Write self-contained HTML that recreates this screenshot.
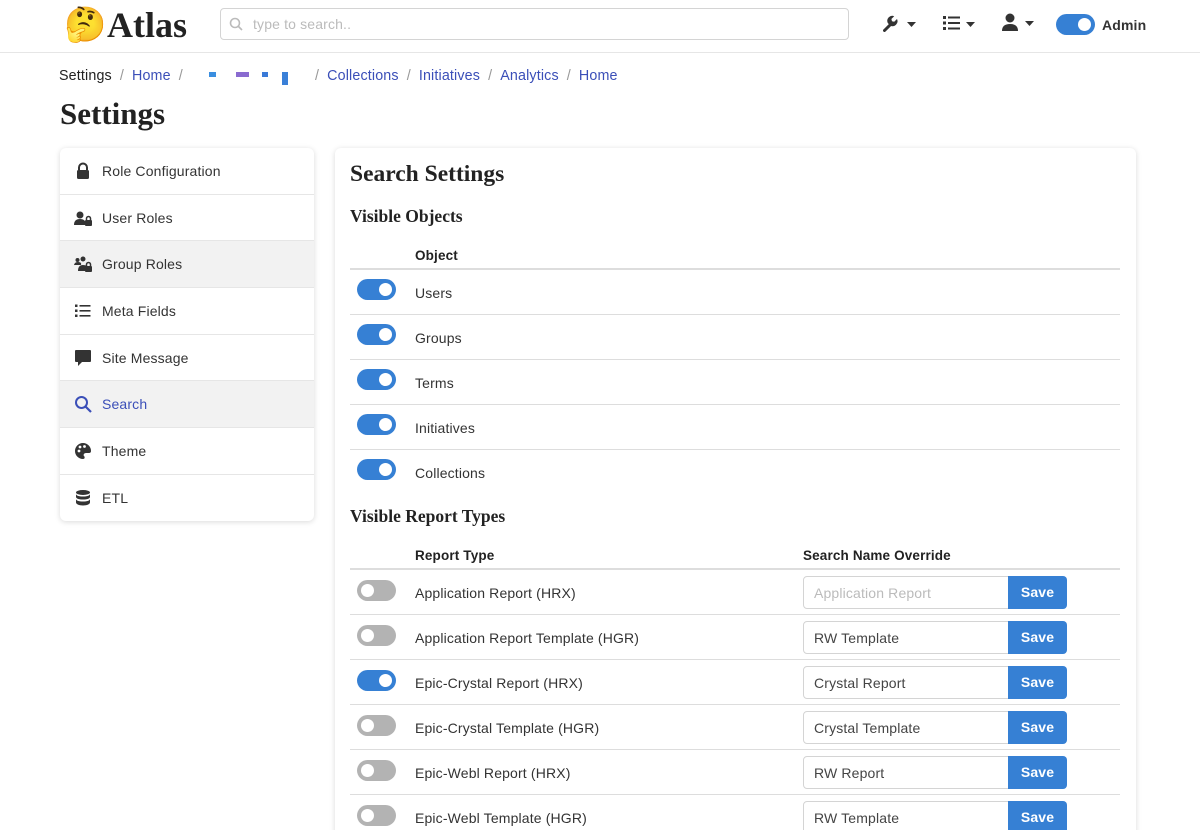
<!DOCTYPE html><html><head><style>
*{box-sizing:border-box;margin:0;padding:0}
html,body{width:1200px;height:830px;overflow:hidden}
body{background:#fff;font-family:"Liberation Sans",sans-serif;color:#333;font-size:14px;position:relative;letter-spacing:.15px}
.a{position:absolute}
.serif{font-family:"Liberation Serif",serif;font-weight:bold;color:#222;letter-spacing:0}
.bc a{color:#3b4fb8;text-decoration:none}
.sep{color:#999;margin:0 8px}
.side{left:60px;top:148px;width:254px;height:373px;border-radius:6px;box-shadow:0 1px 6px rgba(0,0,0,.15);background:#fff;overflow:hidden}
.side div{height:46.7px;border-bottom:1px solid #e6e6e6;display:flex;align-items:center;padding-left:14px;font-size:14px;color:#333}
.side div svg{width:18px;height:18px;margin-right:10px}
.hl{background:#f2f2f2}
.main{left:335px;top:148px;width:801px;height:700px;border-radius:6px;box-shadow:0 1px 6px rgba(0,0,0,.15);background:#fff}
.tog{position:absolute;width:39px;height:21px;border-radius:11px;background:#3680d4}
.tog::after{content:"";position:absolute;right:4px;top:4px;width:13px;height:13px;border-radius:50%;background:#fff}
.off{background:#b3b3b3}.off::after{right:auto;left:4px}
.line{position:absolute;left:350px;width:770px;height:1px;background:#ddd}
.hd{position:absolute;font-weight:bold;font-size:13.5px;color:#222}
.lab{position:absolute;left:415px;font-size:14px;color:#333}
.inp{position:absolute;left:803px;width:206px;height:33px;border:1px solid #d4d4d4;border-radius:4px 0 0 4px;padding:8px 10px;font-size:14px;color:#444}
.btn{position:absolute;left:1008px;width:59px;height:33px;background:#3680d4;color:#fff;font-weight:bold;font-size:14px;border-radius:0 4px 4px 0;text-align:center;line-height:33px}
</style></head><body>
<div class="a" style="left:0;top:52px;width:1200px;height:1px;background:#e6e6e6"></div>
<div class="a" style="left:64px;top:6px;font-size:34px;line-height:38px">🤔</div>
<div class="a serif" style="left:107px;top:5px;font-size:36px;line-height:40px">Atlas</div>
<div class="a" style="left:220px;top:8px;width:629px;height:32px;border:1px solid #d4d4d4;border-radius:4px"></div>
<svg class="a" style="left:229px;top:17px" width="14" height="14" viewBox="0 0 14 14"><circle cx="6" cy="6" r="4.5" fill="none" stroke="#bbb" stroke-width="1.6"/><path d="M9.5 9.5L13 13" stroke="#bbb" stroke-width="1.6"/></svg>
<div class="a" style="left:253px;top:16px;color:#bbb;font-size:14px">type to search..</div>
<svg class="a" style="left:883px;top:14px" width="34" height="18" viewBox="0 0 34 18"><path d="M1.5 16.5L8 10" stroke="#333" stroke-width="3" stroke-linecap="round"/><path d="M7 11.5a5 5 0 0 0 7-6.5l-2.8 2.8-2.2-.6-.6-2.2L11.2 2.2A5 5 0 0 0 4.8 9z" fill="#333"/><path d="M24 8h9l-4.5 5z" fill="#333"/></svg>
<svg class="a" style="left:943px;top:15px" width="34" height="16" viewBox="0 0 34 16"><g fill="#333"><rect x="0" y="1" width="3" height="3"/><rect x="0" y="6.5" width="3" height="3"/><rect x="0" y="12" width="3" height="3"/><rect x="5" y="1.5" width="12" height="2"/><rect x="5" y="7" width="12" height="2"/><rect x="5" y="12.5" width="12" height="2"/><path d="M23 7h9l-4.5 5z"/></g></svg>
<svg class="a" style="left:1002px;top:13px" width="34" height="18" viewBox="0 0 34 18"><g fill="#333"><circle cx="8" cy="5" r="4.5"/><path d="M0 18q0-7 8-7t8 7z"/><path d="M23 8h9l-4.5 5z"/></g></svg>
<div class="tog" style="left:1056px;top:14px"></div>
<div class="a" style="left:1102px;top:17px;font-weight:bold;font-size:14px;color:#333">Admin</div>
<div class="a bc" style="left:59px;top:68px;font-size:14.3px;color:#222">Settings<span class="sep">/</span><a>Home</a><span class="sep">/</span></div>
<div class="a" style="left:209px;top:72px;width:7px;height:5px;background:#3a8ee0"></div>
<div class="a" style="left:236px;top:72px;width:13px;height:5px;background:#8a6bd0"></div>
<div class="a" style="left:262px;top:72px;width:6px;height:5px;background:#3a7ad8"></div>
<div class="a" style="left:282px;top:72px;width:6px;height:13px;background:#3a80d8"></div>
<div class="a bc" style="left:315px;top:68px;font-size:14.3px"><span class="sep" style="margin-left:0">/</span><a>Collections</a><span class="sep">/</span><a>Initiatives</a><span class="sep">/</span><a>Analytics</a><span class="sep">/</span><a>Home</a></div>
<div class="a serif" style="left:60px;top:96px;font-size:31px">Settings</div>
<div class="a side">
<div><svg viewBox="0 0 18 18"><path d="M5 8V5.5a4 4 0 0 1 8 0V8" stroke="#333" stroke-width="2" fill="none"/><rect x="3" y="8" width="12" height="9" rx="1.5" fill="#333"/></svg>Role Configuration</div>
<div><svg viewBox="0 0 18 18" fill="#333"><circle cx="6" cy="6" r="3.5"/><path d="M0 16q0-6 6-6t6 6z"/><rect x="11" y="11" width="7" height="6" rx="1"/><path d="M12.5 11V9.5a2 2 0 0 1 4 0V11" stroke="#333" fill="none" stroke-width="1.5"/></svg>User Roles</div>
<div class="hl"><svg viewBox="0 0 18 18" fill="#333"><circle cx="3.5" cy="5" r="2"/><circle cx="9" cy="4" r="2.5"/><path d="M0 11q0-4 4-4t3 3H0zM4 16q0-6 5-6t4 3v3z"/><rect x="11" y="11" width="7" height="6" rx="1"/><path d="M12.5 11V9.5a2 2 0 0 1 4 0V11" stroke="#333" fill="none" stroke-width="1.5"/></svg>Group Roles</div>
<div><svg viewBox="0 0 18 18" fill="#333"><rect x="1" y="2.5" width="2.5" height="2.5"/><rect x="1" y="7.5" width="2.5" height="2.5"/><rect x="1" y="12.5" width="2.5" height="2.5"/><rect x="5.5" y="3" width="11" height="1.6"/><rect x="5.5" y="8" width="11" height="1.6"/><rect x="5.5" y="13" width="11" height="1.6"/></svg>Meta Fields</div>
<div><svg viewBox="0 0 18 18" fill="#333"><path d="M2 1h14a1 1 0 0 1 1 1v10a1 1 0 0 1-1 1H8l-4 4v-4H2a1 1 0 0 1-1-1V2a1 1 0 0 1 1-1z"/></svg>Site Message</div>
<div class="hl" style="color:#3b4fb8"><svg viewBox="0 0 18 18"><circle cx="7.5" cy="7.5" r="5.5" stroke="#3b4fb8" stroke-width="2" fill="none"/><path d="M11.5 11.5L17 17" stroke="#3b4fb8" stroke-width="2.2"/></svg>Search</div>
<div><svg viewBox="0 0 18 18"><path d="M9 1a8 8 0 0 0 0 16c2 0 2-2 1-3s0-3 2-3h3a2 2 0 0 0 2-2A8 8 0 0 0 9 1z" fill="#333"/><circle cx="5" cy="9" r="1.4" fill="#fff"/><circle cx="6" cy="5" r="1.4" fill="#fff"/><circle cx="10.5" cy="4.5" r="1.4" fill="#fff"/></svg>Theme</div>
<div style="border:0"><svg viewBox="0 0 18 18" fill="#333"><ellipse cx="9" cy="3.5" rx="7" ry="2.5"/><path d="M2 5v3c0 1.5 3 2.5 7 2.5s7-1 7-2.5V5c0 1.5-3 2.5-7 2.5S2 6.5 2 5zM2 10v3.5C2 15 5 16.5 9 16.5s7-1.5 7-3V10c0 1.5-3 2.5-7 2.5S2 11.5 2 10z"/></svg>ETL</div>
</div>
<div class="a main"></div>
<div class="a serif" style="left:350px;top:161px;font-size:23.5px">Search Settings</div>
<div class="a serif" style="left:350px;top:206px;font-size:17.5px">Visible Objects</div>
<div class="hd" style="left:415px;top:248px">Object</div>
<div class="line" style="top:268px;height:2px"></div>
<div class="tog" style="left:357px;top:279px"></div><div class="lab" style="top:285px">Users</div><div class="line" style="top:314px"></div>
<div class="tog" style="left:357px;top:324px"></div><div class="lab" style="top:330px">Groups</div><div class="line" style="top:359px"></div>
<div class="tog" style="left:357px;top:369px"></div><div class="lab" style="top:375px">Terms</div><div class="line" style="top:404px"></div>
<div class="tog" style="left:357px;top:414px"></div><div class="lab" style="top:420px">Initiatives</div><div class="line" style="top:449px"></div>
<div class="tog" style="left:357px;top:459px"></div><div class="lab" style="top:465px">Collections</div>
<div class="a serif" style="left:350px;top:506px;font-size:17.5px">Visible Report Types</div>
<div class="hd" style="left:415px;top:548px">Report Type</div>
<div class="hd" style="left:803px;top:548px">Search Name Override</div>
<div class="line" style="top:568px;height:2px"></div>
<div class="tog off" style="left:357px;top:580px"></div><div class="lab" style="top:585px">Application Report (HRX)</div><div class="inp" style="top:576px;color:#bbb">Application Report</div><div class="btn" style="top:576px">Save</div><div class="line" style="top:614px"></div>
<div class="tog off" style="left:357px;top:625px"></div><div class="lab" style="top:630px">Application Report Template (HGR)</div><div class="inp" style="top:621px">RW Template</div><div class="btn" style="top:621px">Save</div><div class="line" style="top:659px"></div>
<div class="tog" style="left:357px;top:670px"></div><div class="lab" style="top:675px">Epic-Crystal Report (HRX)</div><div class="inp" style="top:666px">Crystal Report</div><div class="btn" style="top:666px">Save</div><div class="line" style="top:704px"></div>
<div class="tog off" style="left:357px;top:715px"></div><div class="lab" style="top:720px">Epic-Crystal Template (HGR)</div><div class="inp" style="top:711px">Crystal Template</div><div class="btn" style="top:711px">Save</div><div class="line" style="top:749px"></div>
<div class="tog off" style="left:357px;top:760px"></div><div class="lab" style="top:765px">Epic-Webl Report (HRX)</div><div class="inp" style="top:756px">RW Report</div><div class="btn" style="top:756px">Save</div><div class="line" style="top:794px"></div>
<div class="tog off" style="left:357px;top:805px"></div><div class="lab" style="top:810px">Epic-Webl Template (HGR)</div><div class="inp" style="top:801px">RW Template</div><div class="btn" style="top:801px">Save</div>
</body></html>
